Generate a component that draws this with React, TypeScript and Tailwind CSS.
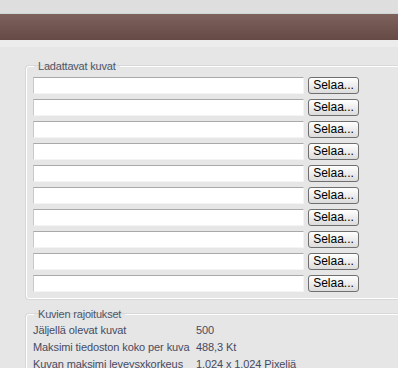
import React from 'react';

const font = { fontFamily: '"Liberation Sans", Arial, sans-serif' };

const limits: [string, string][] = [
  ['Jäljellä olevat kuvat', '500'],
  ['Maksimi tiedoston koko per kuva', '488,3 Kt'],
  ['Kuvan maksimi leveysxkorkeus', '1.024 x 1.024 Pixeliä'],
];

const FileRow: React.FC = () => (
  <div className="flex items-center h-[17px]">
    <div className="w-[271px] h-[17px] bg-white border border-[#f4f4f4] border-t-[#a9a9a9] border-l-[#c8c8c8]" />
    <button className="ml-[4px] w-[51px] h-[17px] rounded-[3px] border border-[#6f6f6f] bg-gradient-to-b from-white to-[#dcdcdc] text-[12px] leading-[15px] text-black pb-[1px]">
      Selaa...
    </button>
  </div>
);

export default function App() {
  return (
    <div className="w-[398px] h-[368px] overflow-hidden bg-[#e6e6e6]" style={font}>
      <div className="h-[13px] bg-[#dedede]" />
      <div className="h-[1px] bg-[#cfd6d6]" />
      <div className="h-[26px] bg-gradient-to-b from-[#7e625c] to-[#654a45]" />
      <div className="h-[7px] bg-[#ececec]" />

      <fieldset className="ml-[26px] mt-[12px] w-[400px] border border-white rounded-[3px] pl-[6px] pb-[6px] shadow-[0_0_0_1px_#d8d8d8]">
        <legend className="ml-[1px] px-[4px] text-[11px] leading-[14px] tracking-[-0.2px] text-[#4f5566]">Ladattavat kuvat</legend>
        <div className="flex flex-col gap-[5px] mt-[4px]">
          {Array.from({ length: 10 }).map((_, i) => (
            <FileRow key={i} />
          ))}
        </div>
      </fieldset>

      <fieldset className="ml-[26px] mt-[8px] w-[400px] border border-white rounded-[3px] pl-[6px] shadow-[0_0_0_1px_#d8d8d8]">
        <legend className="ml-[1px] px-[4px] text-[11px] leading-[14px] tracking-[-0.2px] text-[#4f5566]">Kuvien rajoitukset</legend>
        <div className="flex flex-col mt-[1px]">
          {limits.map(([k, v]) => (
            <div key={k} className="flex h-[17px] items-center text-[11px] tracking-[-0.1px] text-[#464a62] whitespace-nowrap">
              <span className="w-[163px]">{k}</span>
              <span>{v}</span>
            </div>
          ))}
        </div>
      </fieldset>
    </div>
  );
}
